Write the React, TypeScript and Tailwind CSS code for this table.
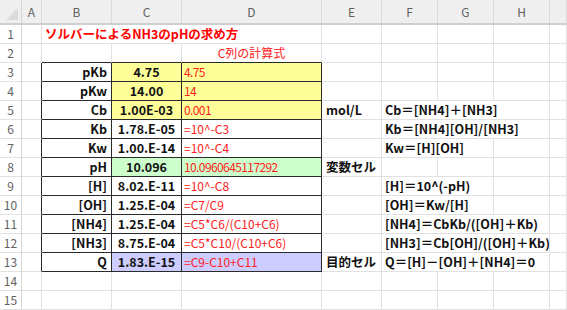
import React from "react";

type RowSpec = {
  b?: string;
  c?: string;
  d?: string;
  e?: string;
  f?: string;
  fSpan?: 2 | 3;
  fill?: "yellow" | "green" | "purple";
};

const rows: Record<number, RowSpec> = {
  3: { b: "pKb", c: "4.75", d: "4.75", fill: "yellow" },
  4: { b: "pKw", c: "14.00", d: "14", fill: "yellow" },
  5: { b: "Cb", c: "1.00E-03", d: "0.001", fill: "yellow", e: "mol/L", f: "Cb＝[NH4]＋[NH3]", fSpan: 3 },
  6: { b: "Kb", c: "1.78.E-05", d: "=10^-C3", f: "Kb＝[NH4][OH]/[NH3]", fSpan: 3 },
  7: { b: "Kw", c: "1.00.E-14", d: "=10^-C4", f: "Kw＝[H][OH]", fSpan: 2 },
  8: { b: "pH", c: "10.096", d: "10.0960645117292", fill: "green", e: "変数セル" },
  9: { b: "[H]", c: "8.02.E-11", d: "=10^-C8", f: "[H]＝10^(-pH)", fSpan: 2 },
  10: { b: "[OH]", c: "1.25.E-04", d: "=C7/C9", f: "[OH]＝Kw/[H]", fSpan: 2 },
  11: { b: "[NH4]", c: "1.25.E-04", d: "=C5*C6/(C10+C6)", f: "[NH4]＝CbKb/([OH]＋Kb)", fSpan: 3 },
  12: { b: "[NH3]", c: "8.75.E-04", d: "=C5*C10/(C10+C6)", f: "[NH3]＝Cb[OH]/([OH]＋Kb)", fSpan: 3 },
  13: { b: "Q", c: "1.83.E-15", d: "=C9-C10+C11", fill: "purple", e: "目的セル", f: "Q＝[H]－[OH]＋[NH4]＝0", fSpan: 3 },
};

const fillClass = {
  yellow: "bg-[#ffff99]",
  green: "bg-[#ccffcc]",
  purple: "bg-[#ccccff]",
};

const grid = "grid grid-cols-[22px_20px_70px_70px_140px_60px_56px_56px_56px_1fr]";
const cell = "h-[19px] border-r border-b border-[#e1e1e1] flex items-center whitespace-nowrap overflow-visible";
const tcell = "h-[19px] border-r border-b border-[#2a2a2a] flex items-center whitespace-nowrap overflow-hidden";

function HeaderRow() {
  const letters = ["A", "B", "C", "D", "E", "F", "G", "H", ""];
  return (
    <div className={`${grid} h-[25px] bg-[#efefef] border-b-2 border-[#cfcfcf]`}>
      <div className="relative border-r border-[#d6d6d6]">
        <div className="absolute right-[3px] bottom-[3px] w-0 h-0 border-l-[12px] border-l-transparent border-b-[12px] border-b-[#dcdcdc]" />
      </div>
      {letters.map((l, i) => (
        <div
          key={i}
          className="flex items-center justify-center border-r border-[#dadada] text-[12px] text-[#616161]"
        >
          {l}
        </div>
      ))}
    </div>
  );
}

function SheetRow({ n }: { n: number }) {
  const r = rows[n];
  const inTable = n >= 3 && n <= 13;
  const fill = r?.fill ? fillClass[r.fill] : "";
  const span = r?.fSpan ?? 1;
  // plain numbers in column D are set a touch tighter than the formulas
  const numeric = r?.d ? /^[0-9.]+$/.test(r.d) : false;

  return (
    <div className={grid}>
      <div className={`${cell} justify-center text-[12px] text-[#616161] border-r-[#d6d6d6]`}>{n}</div>
      <div className={`${cell} ${inTable ? "border-r-[#2a2a2a]" : ""}`} />

      {n === 1 ? (
        <div className={`${cell} col-span-3 pl-[3px] font-bold text-[#ff0000] text-[12.5px]`}>
          ソルバーによるNH3のpHの求め方
        </div>
      ) : n === 2 ? (
        <>
          <div className={`${cell} border-b-[#2a2a2a]`} />
          <div className={`${cell} border-b-[#2a2a2a]`} />
          <div className={`${cell} border-b-[#2a2a2a] justify-center text-[12px] text-[#ff2020]`}>C列の計算式</div>
        </>
      ) : inTable ? (
        <>
          <div className={`${tcell} justify-end pr-[4px] font-bold text-[12.5px] text-[#111]`}>{r.b}</div>
          <div className={`${tcell} ${fill} justify-center font-bold text-[12.5px] text-[#111]`}>{r.c}</div>
          <div
            className={`${tcell} ${fill} pl-[2px] text-[12px] text-[#ff2020] ${numeric ? "tracking-[-0.6px]" : ""}`}
          >
            {r.d}
          </div>
        </>
      ) : (
        <>
          <div className={cell} />
          <div className={cell} />
          <div className={cell} />
        </>
      )}

      <div className={`${cell} pl-[4px] font-bold text-[12.5px] text-[#111]`}>{r?.e}</div>

      {r?.f ? (
        <div
          className={`${cell} ${span === 3 ? "col-span-3" : "col-span-2"} pl-[3px] font-bold text-[12.5px] text-[#111]`}
        >
          {r.f}
        </div>
      ) : (
        <>
          <div className={cell} />
          <div className={cell} />
          <div className={cell} />
        </>
      )}
      {r?.f && span === 2 ? <div className={cell} /> : null}
      <div className={cell} />
    </div>
  );
}

export default function App() {
  return (
    <div className="w-[567px] h-[310px] overflow-hidden bg-white font-['Noto_Sans_CJK_JP','Noto_Sans',sans-serif] leading-none">
      <HeaderRow />
      {Array.from({ length: 15 }, (_, i) => (
        <SheetRow key={i} n={i + 1} />
      ))}
    </div>
  );
}
